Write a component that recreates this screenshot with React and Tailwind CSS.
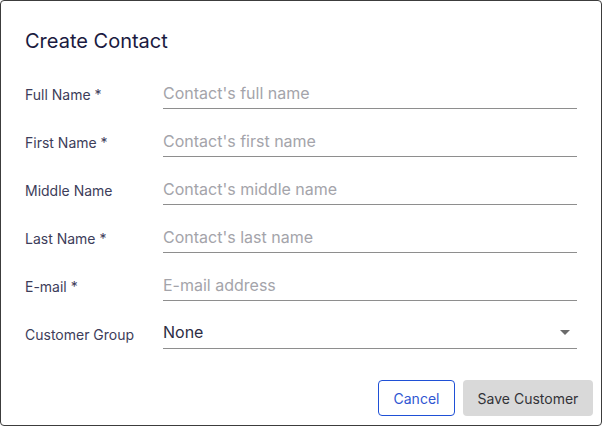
import React from 'react';

const fields = [
  { label: 'Full Name *', placeholder: "Contact's full name" },
  { label: 'First Name *', placeholder: "Contact's first name" },
  { label: 'Middle Name', placeholder: "Contact's middle name" },
  { label: 'Last Name *', placeholder: "Contact's last name" },
  { label: 'E-mail *', placeholder: 'E-mail address' },
];

function Row({ label, children }) {
  return (
    <div className="flex items-center h-[30px]">
      <label className="w-[138px] shrink-0 text-[14px] text-[#3d3d5a]">{label}</label>
      <div className="flex-1 h-[30px] flex items-center border-b border-[#8e8e8e]">{children}</div>
    </div>
  );
}

export default function App() {
  return (
    <div
      className="w-[602px] h-[426px] bg-white border border-[#3c3c3c] rounded-[4px] flex flex-col"
      style={{ fontFamily: 'Inter, "Liberation Sans", sans-serif' }}
    >
      <div className="px-[24px] pt-[26px]">
        <h2 className="text-[20px] leading-[28px] text-[#1a1a40] font-normal">Create Contact</h2>
        <div className="pt-[24px] flex flex-col gap-[18px]">
          {fields.map((f) => (
            <Row key={f.label} label={f.label}>
              <input
                placeholder={f.placeholder}
                className="w-full bg-transparent outline-none text-[16px] text-[#2d2d44] placeholder:text-[#a4a4aa] pb-[2px]"
              />
            </Row>
          ))}
          <Row label="Customer Group">
            <div className="flex-1 text-[16px] text-[#2d2d44] pb-[4px]">None</div>
            <svg width="10" height="5" viewBox="0 0 10 5" className="mr-[7px] mb-[2px]">
              <path d="M0 0h10L5 5z" fill="#6b6b6b" />
            </svg>
          </Row>
        </div>
      </div>
      <div className="flex justify-end gap-[8px] px-[8px] mt-[31px]">
        <button className="w-[77px] h-[36px] rounded-[4px] border border-[#1f50d6] text-[14px] text-[#2f56d2] bg-white">
          Cancel
        </button>
        <button className="w-[130px] h-[36px] rounded-[4px] bg-[#d9d9d9] text-[14px] text-[#333338]">
          Save Customer
        </button>
      </div>
    </div>
  );
}
